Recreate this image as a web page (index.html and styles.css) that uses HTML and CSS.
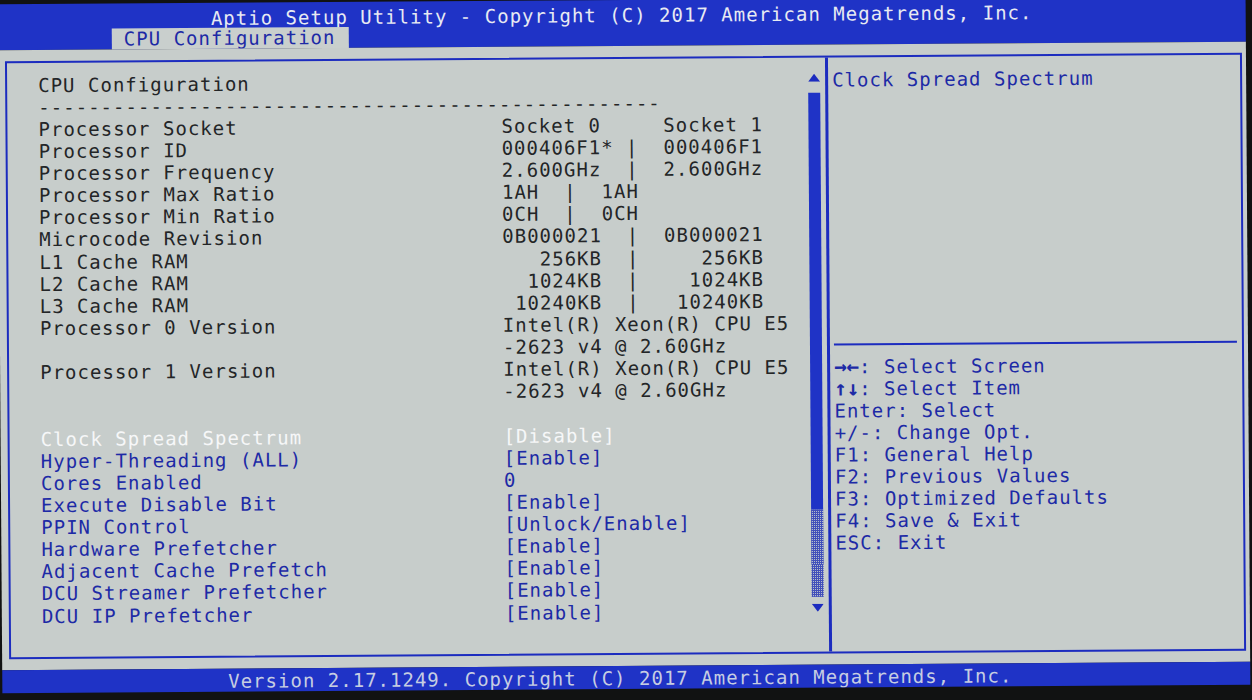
FILE: index.html
```html
<!DOCTYPE html>
<html lang="en">
<head>
<meta charset="utf-8">
<title>Aptio Setup Utility - CPU Configuration</title>
<link rel="stylesheet" href="styles.css">
</head>
<body>
<div class="screen">
  <header class="header">
    <div class="title">Aptio Setup Utility - Copyright (C) 2017 American Megatrends, Inc.</div>
    <div class="tabs"><div class="tab">CPU Configuration</div></div>
  </header>
  <main class="main">
    <div class="frame">
      <section class="left">
        <div class="row"><span class="lbl">CPU Configuration</span></div>
        <div class="row"><span class="lbl"><span>----------</span><span>----------</span><span>----------</span><span>----------</span><span>----------</span></span></div>
        <div class="row"><span class="lbl">Processor Socket</span><span class="val">Socket 0     Socket 1</span></div>
        <div class="row"><span class="lbl">Processor ID</span><span class="val">000406F1* |  000406F1</span></div>
        <div class="row"><span class="lbl">Processor Frequency</span><span class="val">2.600GHz  |  2.600GHz</span></div>
        <div class="row"><span class="lbl">Processor Max Ratio</span><span class="val">1AH  |  1AH</span></div>
        <div class="row"><span class="lbl">Processor Min Ratio</span><span class="val">0CH  |  0CH</span></div>
        <div class="row"><span class="lbl">Microcode Revision</span><span class="val">0B000021  |  0B000021</span></div>
        <div class="row"><span class="lbl">L1 Cache RAM</span><span class="val">   256KB  |     256KB</span></div>
        <div class="row"><span class="lbl">L2 Cache RAM</span><span class="val">  1024KB  |    1024KB</span></div>
        <div class="row"><span class="lbl">L3 Cache RAM</span><span class="val"> 10240KB  |   10240KB</span></div>
        <div class="row"><span class="lbl">Processor 0 Version</span><span class="val">Intel(R) Xeon(R) CPU E5
-2623 v4 @ 2.60GHz</span></div>
        <div class="row"><span class="lbl">Processor 1 Version</span><span class="val">Intel(R) Xeon(R) CPU E5
-2623 v4 @ 2.60GHz</span></div>
        <div class="row blank"></div>
        <div class="row opt selected"><span class="lbl">Clock Spread Spectrum</span><span class="val">[Disable]</span></div>
        <div class="row opt"><span class="lbl">Hyper-Threading (ALL)</span><span class="val">[Enable]</span></div>
        <div class="row opt"><span class="lbl">Cores Enabled</span><span class="val">0</span></div>
        <div class="row opt"><span class="lbl">Execute Disable Bit</span><span class="val">[Enable]</span></div>
        <div class="row opt"><span class="lbl">PPIN Control</span><span class="val">[Unlock/Enable]</span></div>
        <div class="row opt"><span class="lbl">Hardware Prefetcher</span><span class="val">[Enable]</span></div>
        <div class="row opt"><span class="lbl">Adjacent Cache Prefetch</span><span class="val">[Enable]</span></div>
        <div class="row opt"><span class="lbl">DCU Streamer Prefetcher</span><span class="val">[Enable]</span></div>
        <div class="row opt"><span class="lbl">DCU IP Prefetcher</span><span class="val">[Enable]</span></div>
      </section>
      <div class="scroll">
        <svg class="arrow" width="12" height="8" viewBox="0 0 12 8"><polygon points="6,0 12,8 0,8"/></svg>
        <div class="thumb"></div>
        <div class="track"></div>
        <svg class="arrow down" width="12" height="8" viewBox="0 0 12 8"><polygon points="0,0 12,0 6,8"/></svg>
      </div>
      <aside class="right">
        <div class="desc">Clock Spread Spectrum</div>
        <div class="hr"></div>
        <div class="keys">
          <div class="key"><span class="arr">→←</span>: Select Screen</div>
          <div class="key"><span class="arr">↑↓</span>: Select Item</div>
          <div class="key">Enter: Select</div>
          <div class="key">+/-: Change Opt.</div>
          <div class="key">F1: General Help</div>
          <div class="key">F2: Previous Values</div>
          <div class="key">F3: Optimized Defaults</div>
          <div class="key">F4: Save &amp; Exit</div>
          <div class="key">ESC: Exit</div>
        </div>
      </aside>
    </div>
  </main>
  <footer class="footer">Version 2.17.1249. Copyright (C) 2017 American Megatrends, Inc.</footer>
</div>
</body>
</html>
```

FILE: styles.css
```css
html, body {
  margin: 0;
  padding: 0;
}

body {
  width: 1252px;
  height: 700px;
  overflow: hidden;
  background: #111212;
  font-family: "DejaVu Sans Mono", "Liberation Mono", monospace;
  font-size: 19px;
  letter-spacing: 1.01px;
}

.screen {
  width: 1248px;
  height: 689px;
  display: flex;
  flex-direction: column;
  transform: rotate(-0.4deg);
  transform-origin: 626px 350px;
}

.header {
  height: 46px;
  background: #1f33c6;
  display: flex;
  flex-direction: column;
}

.title {
  height: 25px;
  padding-top: 4px;
  box-sizing: border-box;
  line-height: 22px;
  text-align: center;
  color: #e8eaf2;
  white-space: pre;
}

.tabs {
  height: 21px;
  padding-left: 114px;
}

.tab {
  width: 237px;
  height: 21px;
  box-sizing: border-box;
  padding-left: 12px;
  line-height: 21px;
  background: #c9cfcd;
  color: #1d2aa6;
}

.main {
  height: 620px;
  box-sizing: border-box;
  padding: 11px 4px 11px 7px;
  background: #c7cdcb;
}

.frame {
  height: 598px;
  box-sizing: border-box;
  border: 2px solid #1c2cbf;
  display: flex;
}

.left {
  width: 800px;
  box-sizing: border-box;
  padding: 10.5px 0 0 31px;
  line-height: 22.13px;
  color: #232527;
}

.row {
  display: grid;
  grid-template-columns: 463px 1fr;
  white-space: pre;
}

.row.blank {
  height: 22.13px;
}

.row.opt {
  color: #1d2aa6;
}

.row.selected {
  color: #f6f7f8;
}

.scroll {
  width: 13px;
  margin-right: 5px;
  display: flex;
  flex-direction: column;
  align-items: center;
  padding-top: 16px;
  box-sizing: border-box;
}

.arrow {
  display: block;
  fill: #1c2cbf;
}

.thumb {
  width: 12px;
  height: 417px;
  margin-top: 11px;
  background: #1f33c6;
}

.track {
  width: 12px;
  height: 87px;
  background-color: #b4bccb;
  background-image:
    repeating-linear-gradient(90deg, #2a3ab8 0 1px, transparent 1px 2px),
    repeating-linear-gradient(0deg, #2a3ab8 0 1px, transparent 1px 2px);
  opacity: 0.85;
}

.arrow.down {
  margin-top: 7px;
}

.right {
  flex: 1;
  border-left: 3px solid #1c2cbf;
  padding-left: 4px;
  display: flex;
  flex-direction: column;
  color: #1d2aa6;
}

.desc {
  height: 286px;
  box-sizing: border-box;
  padding-top: 10.5px;
  line-height: 22.13px;
  white-space: pre;
}

.hr {
  height: 2px;
  margin-right: 5px;
  background: #1c2cbf;
}

.keys {
  padding-top: 10.3px;
  line-height: 22px;
}

.key {
  height: 22px;
  white-space: pre;
}

.arr {
  font-size: 21px;
  font-weight: bold;
  letter-spacing: -0.2px;
  line-height: 0;
}

.footer {
  height: 23px;
  line-height: 25px;
  overflow: hidden;
  text-align: center;
  padding-right: 12px;
  background: #1f33c6;
  color: #c6cde2;
  white-space: pre;
}
```
